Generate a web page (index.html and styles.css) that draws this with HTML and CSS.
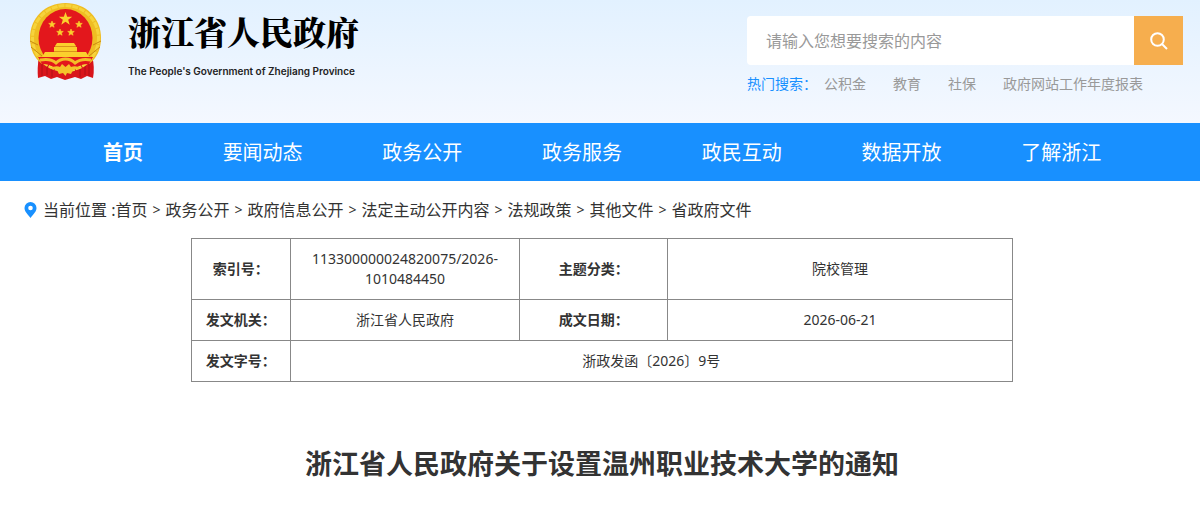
FILE: index.html
```html
<!DOCTYPE html>
<html lang="zh-CN">
<head>
<meta charset="utf-8">
<meta name="viewport" content="width=device-width, initial-scale=1">
<title>浙江省人民政府关于设置温州职业技术大学的通知</title>
<link rel="stylesheet" href="styles.css">
</head>
<body>
<header class="header">
  <a class="brand" href="#">
    <svg class="emblem" viewBox="0 0 74 80" aria-hidden="true">
      <path d="M10 54 Q8 66 9 76 L16 74 L22 77 L28 75 L36 78 L46 75 L52 77 L58 74 L64 76 Q66 65 63 54Z" fill="#d9151b"/>
      <path d="M13 60v14M18 63v10M23 66v9M51 66v9M56 63v10M60 60v14" stroke="#b01116" fill="none"/>
      <path d="M36.500 1C16 1 1 16 1 36c0 11 4 20 12 26h47c8-6 12-15 12-26C72 16 57 1 36.500 1z" fill="#efbd22"/>
      <ellipse cx="36.500" cy="36" rx="33" ry="32.500" fill="none" stroke="#f6d43c" stroke-width="3" stroke-dasharray="6 1"/>
      <path d="M2 45l11 9M1 39l8 4M71 45l-11 9M72 39l-8 4" stroke="#c98a10" fill="none"/>
      <ellipse cx="36.500" cy="36" rx="27" ry="29" fill="#e3171c"/>
      <g fill="#fbd02d">
        <path d="M36.500 10l1.700 4.700 5 .1-4 3 1.500 4.900-4.200-2.900-4.200 2.900 1.500-4.900-4-3 5-.1z"/>
        <path id="star" d="M23 19l.9 2.300 2.400.1-1.900 1.500.7 2.400-2.100-1.400-2.100 1.400.7-2.400-1.900-1.500 2.400-.1z" stroke="#fbd02d" stroke-width=".6"/>
        <use href="#star" x="27"/>
        <use href="#star" x="8" y="8"/>
        <use href="#star" x="19" y="8"/>
        <path d="M28 41h17l2 3H26z"/>
        <path d="M25 45h23v5H25z"/>
        <path d="M16 50h41l3 5H13z"/>
      </g>
      <path d="M26 44.500h21M25 49.500h23" stroke="#d9941a" fill="none"/>
      <path d="M9 55 H64 L60 62 Q51 62 47 66 Q36 70 26 66 Q21 62 13 62Z" fill="#e3171c"/>
      <path d="M11 58 Q22 56 27 61 Q31 57 36.500 57 Q42 57 46 61 Q52 56 62 58" stroke="#f4bd27" stroke-width="3" fill="none"/>
      <path d="M20 66 Q28 63 31 65 L33 62 L36.500 65 L40 62 L42 65 Q46 63 53 66 L44 68 L42 72 L38 71 L36.500 74 L34 71 L30 72 L28 68Z" fill="#f4c32a"/>
    </svg>
    <span class="brand-text">
      <span class="brand-name">浙江省人民政府</span>
      <span class="brand-en">The People's Government of Zhejiang Province</span>
    </span>
  </a>
  <div class="search">
    <form class="search-form" role="search">
      <input class="search-input" type="text" aria-label="搜索" placeholder="请输入您想要搜索的内容">
      <button class="search-button" type="button" aria-label="搜索">
        <svg class="search-icon" viewBox="0 0 18 18" aria-hidden="true"><circle cx="7.500" cy="7.500" r="6.300"/><path d="M12 12l5 5"/></svg>
      </button>
    </form>
    <div class="hot">
      <span class="hot-label">热门搜索：</span>
      <a href="#">公积金</a>
      <a href="#">教育</a>
      <a href="#">社保</a>
      <a href="#">政府网站工作年度报表</a>
    </div>
  </div>
</header>
<nav class="nav">
  <a class="nav-item nav-home" href="#">首页</a>
  <a class="nav-item" href="#">要闻动态</a>
  <a class="nav-item" href="#">政务公开</a>
  <a class="nav-item" href="#">政务服务</a>
  <a class="nav-item" href="#">政民互动</a>
  <a class="nav-item" href="#">数据开放</a>
  <a class="nav-item" href="#">了解浙江</a>
</nav>
<main class="main">
  <div class="crumbs">
    <svg class="pin" viewBox="0 0 12 16" aria-hidden="true"><path fill="#1890ff" fill-rule="evenodd" d="M6 0a6 6 0 0 1 6 6c0 3.500-3 6-6 10C3 12 0 9.500 0 6a6 6 0 0 1 6-6zm0 3.700a2.300 2.300 0 1 0 0 4.600 2.300 2.300 0 0 0 0-4.600z"/></svg>
    <span>当前位置 :<a href="#">首页</a></span><span class="sep">&gt;</span>
    <a href="#">政务公开</a><span class="sep">&gt;</span>
    <a href="#">政府信息公开</a><span class="sep">&gt;</span>
    <a href="#">法定主动公开内容</a><span class="sep">&gt;</span>
    <a href="#">法规政策</a><span class="sep">&gt;</span>
    <a href="#">其他文件</a><span class="sep">&gt;</span>
    <a href="#">省政府文件</a>
  </div>
  <table class="info">
    <colgroup><col class="c1"><col class="c2"><col class="c3"><col class="c4"></colgroup>
    <tbody>
      <tr><th scope="row">索引号：</th><td>113300000024820075/2026-<wbr>1010484450</td><th scope="row">主题分类：</th><td>院校管理</td></tr>
      <tr><th scope="row">发文机关：</th><td>浙江省人民政府</td><th scope="row">成文日期：</th><td>2026-06-21</td></tr>
      <tr><th scope="row">发文字号：</th><td colspan="3">浙政发函〔2026〕9号</td></tr>
    </tbody>
  </table>
  <h1 class="title">浙江省人民政府关于设置温州职业技术大学的通知</h1>
</main>
</body>
</html>
```
FILE: styles.css
```css
* { box-sizing: border-box; }
body {
  margin: 0;
  background: #fff;
  color: #333;
  font-family: "Noto Sans", "Noto Sans CJK SC", sans-serif;
  font-size: 14px;
  line-height: 20px;
}
a { color: inherit; text-decoration: none; }

.header {
  display: flex;
  justify-content: space-between;
  align-items: flex-start;
  min-height: 123px;
  padding: 0 17px 0 29px;
  background: linear-gradient(#e2f1ff, #f4f8ff);
}
.brand { display: flex; gap: 25px; padding-top: 2px; color: #000; }
.emblem { width: 74px; height: 80px; }
.brand-text { display: flex; flex-direction: column; gap: 16px; padding-top: 11px; }
.brand-name {
  font-family: "Noto Serif CJK SC", "Noto Sans CJK SC", serif;
  font-size: 33px;
  font-weight: 900;
  line-height: 36px;
}
.brand-en {
  font-family: Inter, Arial, sans-serif;
  font-size: 10px;
  font-weight: 600;
  line-height: 12px;
  color: #222;
}

.search { width: 436px; padding-top: 16px; }
.search-form { display: flex; height: 49px; }
.search-input {
  flex: 1;
  min-width: 0;
  padding: 0 19px;
  border: 0;
  border-radius: 4px 0 0 4px;
  background: #fff;
  font: inherit;
  font-size: 16px;
  color: #333;
}
.search-input::placeholder { color: #999; opacity: 1; }
.search-button {
  display: flex;
  align-items: center;
  justify-content: center;
  width: 49px;
  padding: 0;
  border: 0;
  background: #f6ae4e;
}
.search-icon { width: 18px; height: 18px; fill: none; stroke: #fff; stroke-width: 2; }
.hot { display: flex; gap: 27px; padding-top: 9px; color: #999; white-space: nowrap; }
.hot-label { margin-right: -20px; color: #1890ff; }

.nav { display: flex; padding: 0 59px 0 63px; background: #1890ff; }
.nav-item {
  flex: 4;
  padding-top: 2px;
  color: #fff;
  font-size: 20px;
  line-height: 56px;
  text-align: center;
}
.nav-home { flex: 3; font-weight: 700; }

.main { padding: 0 20px 0 24px; }
.crumbs {
  display: flex;
  align-items: center;
  padding: 19px 0 18px;
  font-size: 16px;
}
.pin { width: 13px; height: 16px; margin-right: 6px; }
.sep { width: 18px; font-size: 14px; text-align: center; }

.info {
  width: 822px;
  max-width: 100%;
  margin: 0 auto;
  border-collapse: collapse;
  table-layout: fixed;
  text-align: center;
}
.info th, .info td { padding: 10px; border: 1px solid #888; }
.info th { padding: 10px 5px; }
.c1 { width: 12%; }
.c2 { width: 28%; }
.c3 { width: 18%; }
.c4 { width: 42%; }

.title {
  margin: 63px 0 30px;
  font-size: 27px;
  line-height: 38px;
  font-weight: 700;
  text-align: center;
}
```
